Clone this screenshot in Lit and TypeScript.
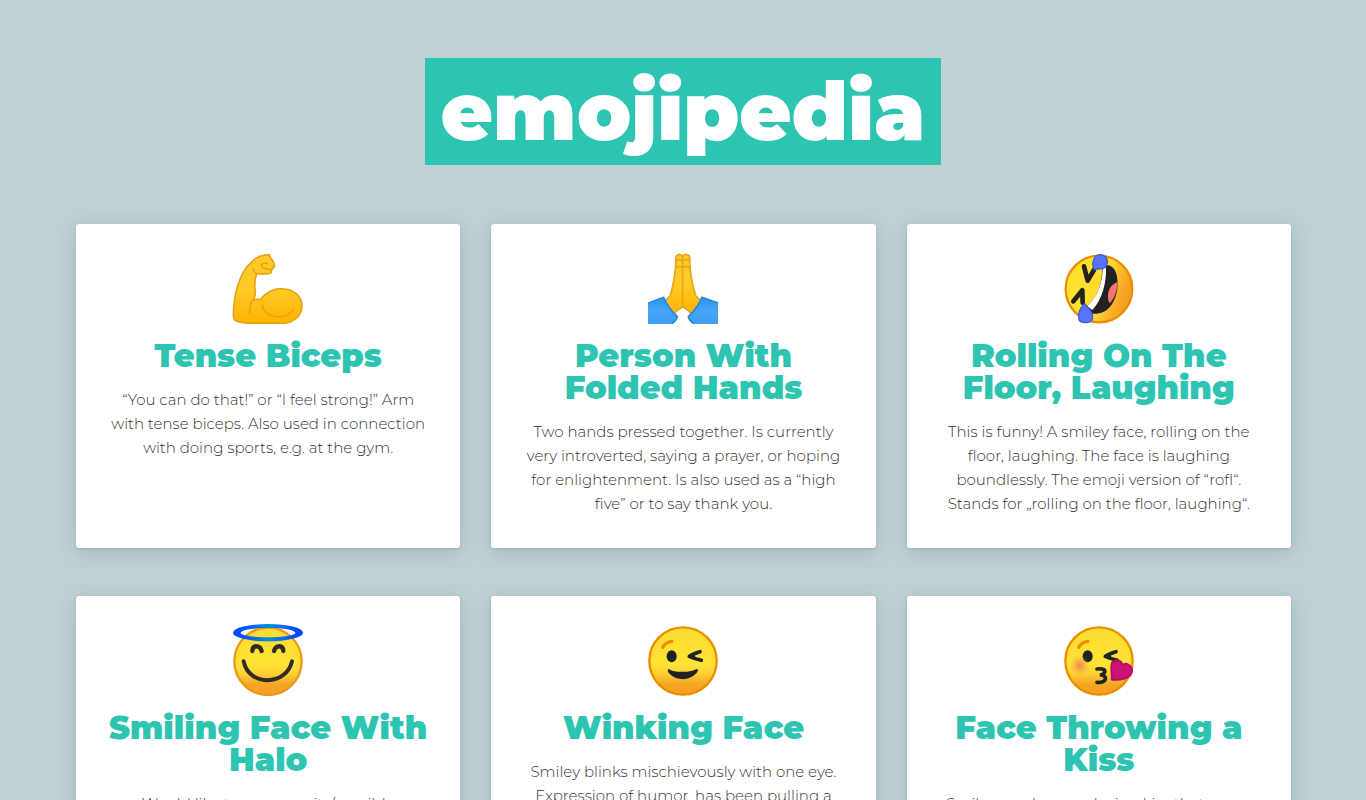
import { LitElement, html, css, svg } from "lit";
import { customElement } from "lit/decorators.js";

const faceGradient = (id: string) => svg`
  <linearGradient id=${id} gradientUnits="userSpaceOnUse" x1="0" y1="45" x2="0" y2="250">
    <stop offset="0" stop-color="#fddc2e"/><stop offset=".55" stop-color="#ffe236"/>
    <stop offset=".68" stop-color="#fdd033"/><stop offset=".84" stop-color="#f6a526"/><stop offset="1" stop-color="#f59f22"/>
  </linearGradient>`;

const biceps = svg`
  <linearGradient id="arm" x1="0" y1="0" x2="0" y2="1"><stop offset=".5" stop-color="#ffca28"/><stop offset="1" stop-color="#ffb300"/></linearGradient>
  <path d="M100 61Q114 46 148 44Q151 55 160 65L164 79Q152 87 154 97Q149 105 110 101Q101 128 106 155Q106 169 101 179L122 177C144 153 169 143 193 147C225 149 246 172 246 199C244 233 215 250 185 250H101C72 250 42 247 41 233C38 198 47 125 81 80Z" fill="url(#arm)" stroke="#e5a414" stroke-width="5" stroke-linejoin="round"/>
  <path d="M99 87Q102 98 112 101M154 90Q144 88 130 84Q120 76 126 72Q132 68 143 71M154 89Q158 86 163 79M101 179Q88 188 90 220M127 196C136 241 204 239 220 208" fill="none" stroke="#e5a414" stroke-width="5" stroke-linecap="round"/>`;

const hands = svg`
  <linearGradient id="skin" x1="0" y1="0" x2="0" y2="1"><stop offset=".5" stop-color="#ffca28"/><stop offset="1" stop-color="#ffb300"/></linearGradient>
  <linearGradient id="sleeveL" x1="0" y1="0" x2="0" y2="1"><stop offset="0" stop-color="#2f94f1"/><stop offset=".5" stop-color="#45a5f6"/><stop offset="1" stop-color="#3f9ff4"/></linearGradient>
  <path d="M143 201C129 207 119 215 119 225L89 187Q99 171 105 169Q117 131 122 79L123 51Q125 43 134 43Q141 43 143 51Q145 43 153 43Q162 43 164 51L165 79Q169 129 183 169Q191 173 199 186L168 225Q166 212 143 201Z" fill="url(#skin)" stroke="#e8a719" stroke-width="5"/>
  <path d="M143 51V201M123 65Q125 59 132 59Q141 58 143 66Q145 58 155 59Q163 59 164 66M122 85Q125 78 133 79Q141 79 143 87Q145 79 154 79Q163 80 165 86" fill="none" stroke="#e8a719" stroke-width="5"/>
  <path d="M39 190L86 172Q98 203 127 230Q123 246 106 252H39Z" fill="url(#sleeveL)"/>
  <path d="M249 189L201 172Q188 203 160 230Q163 246 181 252H249Z" fill="url(#sleeveL)"/>
  <path d="M39 190L86 172Q98 203 127 230Q123 244 108 252M249 189L201 172Q188 203 160 230Q163 244 179 252" fill="none" stroke="#2388df" stroke-width="5"/>`;

const rolling = svg`
  <linearGradient id="roll" gradientUnits="userSpaceOnUse" x1="50" y1="115" x2="240" y2="178"><stop offset="0" stop-color="#ffe22e"/><stop offset=".55" stop-color="#ffdb2d"/><stop offset=".82" stop-color="#f7a928"/><stop offset="1" stop-color="#f39c20"/></linearGradient>
  <circle cx="144" cy="147" r="100" fill="url(#roll)" stroke="#eb8f00" stroke-width="7"/>
  <g transform="translate(-3 0)">
  <path d="M165 75C198 72 206 112 202 146C195 192 171 225 126 221L111 198C149 164 157 122 156 83Z" fill="#222"/>
  <path d="M158 83L168 82C170 125 157 180 127 210L111 198C149 164 157 122 158 83Z" fill="#fff"/>
  <path d="M202 126C180 133 166 162 178 190C193 178 202 153 202 126Z" fill="#f27572"/>
  <path d="M102 79L113 122L132 90M70 184L97 151L98 188" fill="none" stroke="#222" stroke-width="14" stroke-linecap="round" stroke-linejoin="round"/>
  <path d="M133 89C123 71 131 43 153 44C175 47 177 72 164 83C155 90 146 83 133 89Z" fill="#5874ff" stroke="#4359d4" stroke-width="4"/>
  <path d="M105 192C90 202 83 221 87 239C93 251 122 251 128 236C130 219 119 210 105 192Z" fill="#5874ff" stroke="#4359d4" stroke-width="4"/>
  </g>`;

const halo = svg`${faceGradient("haloFace")}
  <linearGradient id="ring" gradientUnits="userSpaceOnUse" x1="39" x2="249" y1="62" y2="62"><stop offset="0" stop-color="#004bff"/><stop offset=".2" stop-color="#0859ff"/><stop offset=".52" stop-color="#008fd7"/><stop offset=".8" stop-color="#0859ff"/><stop offset="1" stop-color="#0040ff"/></linearGradient>
  <circle cx="144" cy="148" r="101" fill="url(#haloFace)" stroke="#e99a1b" stroke-width="7"/>
  <path d="M97 117C98 98 119 98 125 117M162 117C168 98 189 98 190 117" fill="none" stroke="#302c22" stroke-width="13" stroke-linecap="round"/>
  <path d="M71 148C86 224 199 223 216 148" fill="none" stroke="#302c22" stroke-width="12" stroke-linecap="round"/>
  <path fill-rule="evenodd" d="M39 62A105 26 0 1 1 249 62A105 26 0 1 1 39 62ZM62 62A82 14 0 1 0 226 62A82 14 0 1 0 62 62Z" fill="url(#ring)"/>`;

const winkEyes = svg`
  <path d="M83 106Q93 89 111 88" fill="none" stroke="#eb8f00" stroke-width="10" stroke-linecap="round"/>
  <ellipse cx="110" cy="133" rx="15" ry="18" fill="#222"/>
  <path d="M163 133C172 126 183 122 195 119M163 133Q178 140 199 145M174 128L176 136" fill="none" stroke="#222" stroke-width="11" stroke-linecap="round"/>`;

const wink = svg`${faceGradient("winkFace")}
  <circle cx="144" cy="147" r="101" fill="url(#winkFace)" stroke="#eb8f00" stroke-width="7"/>
  ${winkEyes}
  <path d="M99 172Q96 177 104 186C127 208 165 206 184 184Q192 174 187 171Q180 173 172 176Q142 183 111 176Q104 172 99 172Z" fill="#222"/>`;

const kiss = svg`${faceGradient("kissFace")}
  <radialGradient id="blush"><stop offset="0" stop-color="#ef7c55" stop-opacity=".9"/><stop offset="1" stop-color="#ef8c50" stop-opacity="0"/></radialGradient>
  <circle cx="144" cy="147" r="101" fill="url(#kissFace)" stroke="#eb8f00" stroke-width="7"/>
  ${winkEyes}
  <circle cx="86" cy="160" r="30" fill="url(#blush)"/>
  <path d="M138 171C151 169 164 171 161 181Q156 190 147 189C160 187 167 198 161 205Q154 213 138 211" fill="none" stroke="#222" stroke-width="11" stroke-linecap="round"/>
  <path d="M182 203C184 185 176 163 184 150C196 139 213 145 215 160C227 146 247 165 243 180C239 199 207 206 182 203Z" fill="#cb1277" stroke="#b30969" stroke-width="5" stroke-linejoin="round"/>`;

const entries = [
  { icon: biceps, name: "Tense Biceps", meaning: "“You can do that!” or “I feel strong!” Arm with tense biceps. Also used in connection with doing sports, e.g. at the gym." },
  { icon: hands, name: "Person With Folded Hands", meaning: "Two hands pressed together. Is currently very introverted, saying a prayer, or hoping for enlightenment. Is also used as a “high five” or to say thank you." },
  { icon: rolling, name: "Rolling On The Floor, Laughing", meaning: "This is funny! A smiley face, rolling on the floor, laughing. The face is laughing boundlessly. The emoji version of “rofl“. Stands for „rolling on the floor, laughing“." },
  { icon: halo, name: "Smiling Face With Halo", meaning: "Would like to seem purity/possible" },
  { icon: wink, name: "Winking Face", meaning: "Smiley blinks mischievously with one eye. Expression of humor, has been pulling a" },
  { icon: kiss, name: "Face Throwing a Kiss", meaning: "Smiley sends a very loving kiss that says a" },
];

@customElement("app-root")
export class AppRoot extends LitElement {
  static styles = css`
    :host { display: block; min-height: 100vh; background: #c0d1d4; font-family: Montserrat, Inter, sans-serif; text-align: center; }
    * { box-sizing: border-box; }
    .page { padding: 58px 0 48px; }
    .title { width: fit-content; margin: 0 auto 59px; padding: 5px 16px; background: #2ec4b2; color: #fff; font-size: 80px; line-height: 97px; font-weight: 900; }
    .cards { display: grid; grid-template-columns: repeat(3, minmax(0, 1fr)); gap: 48px 31px; padding: 0 75px 0 76px; }
    .card { padding: 28px 32px 32px; background: #fff; border-radius: 3px; box-shadow: 0 4px 20px rgba(50, 80, 70, .2), 0 1px 3px rgba(50, 80, 70, .12); }
    .icon { display: block; width: 72px; height: 72px; margin: 0 auto 16px; }
    .name { margin: 0 0 16px; color: #2ec4b2; font-size: 32px; line-height: 32px; font-weight: 900; }
    .meaning { margin: 0; color: #333; font-size: 15px; line-height: 24px; font-weight: 300; }
  `;

  render() {
    return html`<main class="page">
      <h1 class="title">emojipedia</h1>
      <div class="cards">
        ${entries.map((e) => html`<article class="card">
          <svg class="icon" viewBox="36 36 216 216" aria-hidden="true">${e.icon}</svg>
          <h2 class="name">${e.name}</h2>
          <p class="meaning">${e.meaning}</p>
        </article>`)}
      </div>
    </main>`;
  }
}
